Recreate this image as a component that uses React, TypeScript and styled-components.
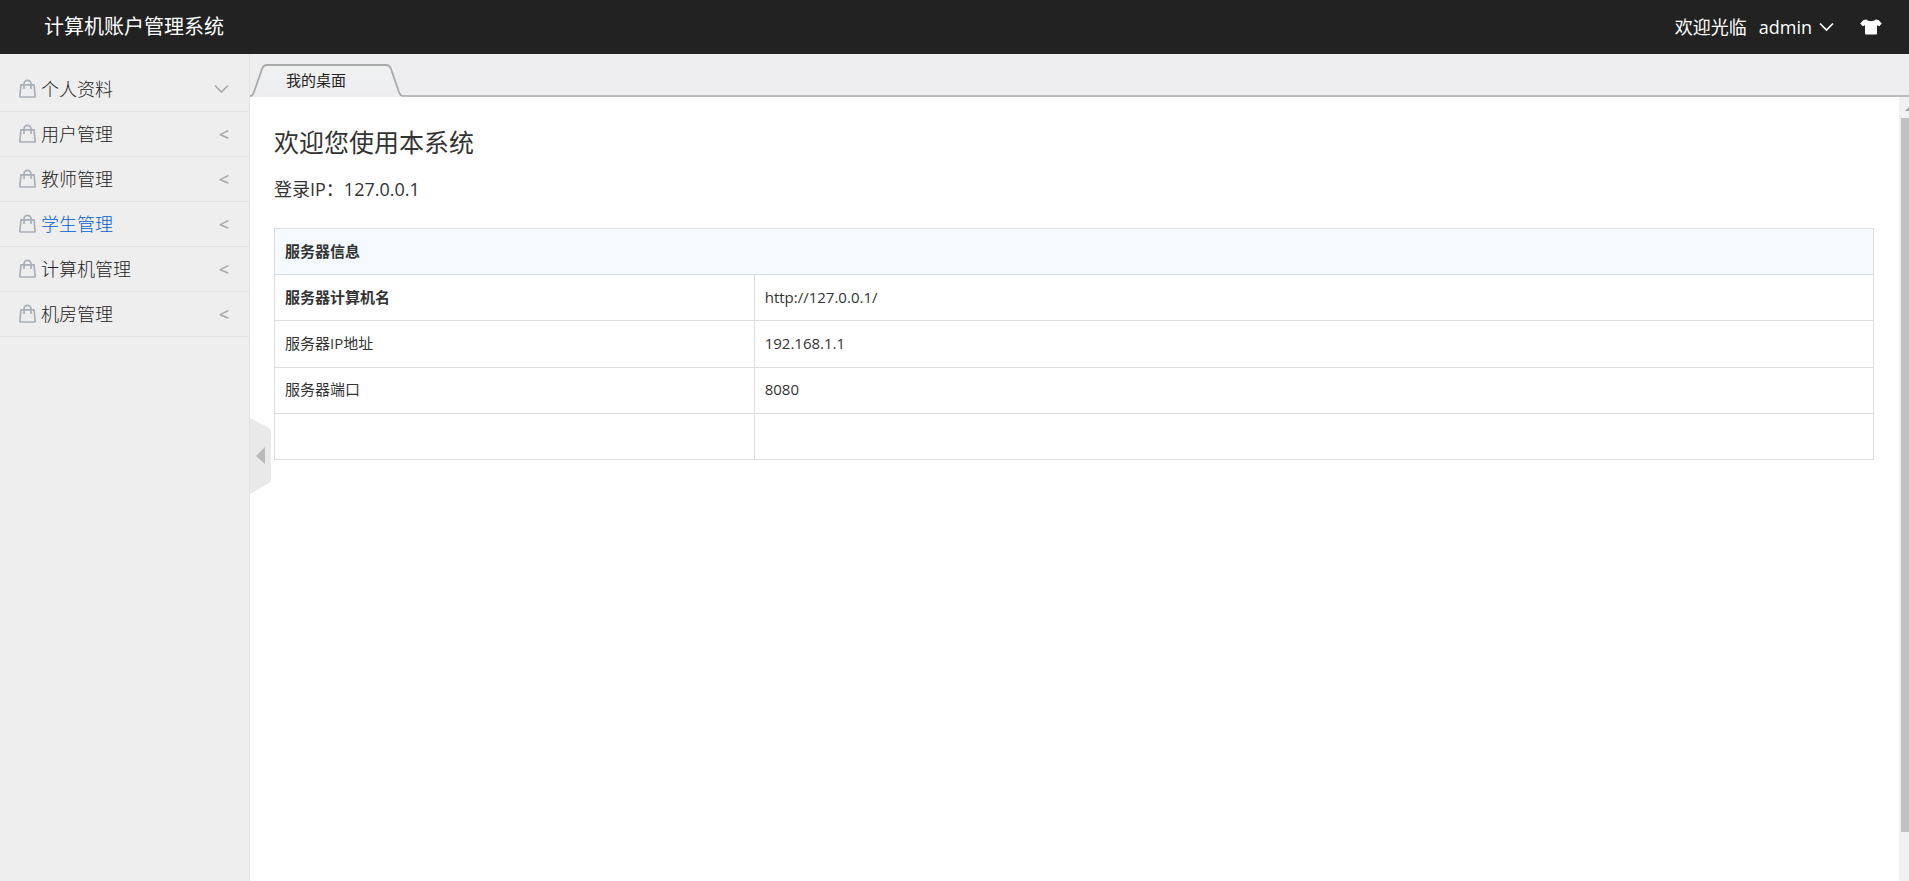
import React from 'react';
import styled, { createGlobalStyle } from 'styled-components';

const GlobalStyle = createGlobalStyle`
  *, *::before, *::after { box-sizing: border-box; }
  body {
    margin: 0;
    overflow: hidden;
    color: #333;
    background: #fff;
    font: 15px/24px 'Open Sans', 'Noto Sans CJK SC', sans-serif;
  }
  h1, p { margin: 0; font-weight: 400; }
  button { font: inherit; color: inherit; background: none; border: 0; padding: 0; cursor: pointer; }
  a { color: inherit; text-decoration: none; }
`;

const Page = styled.div`
  display: flex;
  flex-direction: column;
  height: 100vh;
`;

const Header = styled.header`
  display: flex;
  align-items: center;
  flex: none;
  height: 54px;
  padding: 0 27px 0 44px;
  color: #fff;
  background: #222;
`;

const Logo = styled.a`
  margin-right: auto;
  font-size: 20px;
`;

const UserArea = styled.div`
  display: flex;
  align-items: center;
  gap: 12px;
  font-size: 18px;
`;

const HeaderButton = styled.button`
  display: flex;
  align-items: center;
  gap: 7px;
`;

const SkinButton = styled(HeaderButton)`
  margin-left: 14px;
`;

const Body = styled.div`
  display: flex;
  flex: 1;
  min-height: 0;
`;

const Sidebar = styled.nav`
  flex: none;
  width: 250px;
  padding-top: 13px;
  background: #eee;
  border-right: 1px solid #e3e3e3;
`;

const MenuItem = styled.button<{ $active?: boolean }>`
  display: flex;
  align-items: center;
  gap: 4px;
  width: 100%;
  height: 45px;
  padding: 0 20px 0 18px;
  border-bottom: 1px solid #e3e3e3;
  font-size: 18px;
  font-weight: 300;
  color: ${(p) => (p.$active ? '#0060d0' : '#222')};
`;

const MenuMark = styled.span`
  display: flex;
  margin-left: auto;
  color: #aaa;
  font-weight: 600;
`;

const Main = styled.main`
  position: relative;
  display: flex;
  flex-direction: column;
  flex: 1;
  min-width: 0;
`;

const TabBar = styled.div`
  display: flex;
  align-items: flex-end;
  flex: none;
  height: 43px;
  background: #eeeef0;
  border-bottom: 2px solid #bbb;
`;

const Tab = styled.button`
  position: relative;
  width: 153px;
  height: 33px;
  margin-bottom: -2px;
  padding: 0 0 2px 36px;
  text-align: left;
  font-size: 15px;
  color: #222;
`;

const TabShape = styled.svg`
  position: absolute;
  inset: 0;
`;

const TabLabel = styled.span`
  position: relative;
`;

const Frame = styled.div`
  display: flex;
  flex: 1;
  min-height: 0;
`;

const Content = styled.section`
  flex: 1;
  padding: 27px 25px 0 24px;
`;

const Welcome = styled.h1`
  font-size: 25px;
  line-height: 36px;
`;

const LoginIp = styled.p`
  margin: 15px 0 25px;
  font-size: 18px;
  line-height: 28px;
`;

const InfoTable = styled.table`
  width: 100%;
  height: 232px;
  border-collapse: collapse;
  table-layout: fixed;
  td, th {
    height: 46px;
    padding: 0 10px 2px;
    border: 1px solid #ddd;
    text-align: left;
    font-weight: 400;
  }
  thead th { font-weight: 700; background: #f5fafe; }
`;

const NameColumn = styled.col`
  width: 30%;
`;

const Name = styled.th<{ $strong?: boolean }>`
  && { font-weight: ${(p) => (p.$strong ? 700 : 400)}; }
`;

const ScrollTrack = styled.div`
  display: flex;
  flex-direction: column;
  align-items: flex-end;
  flex: none;
  width: 10px;
  background: #f1f1f1;
`;

const ScrollArrow = styled.svg`
  flex: none;
  display: block;
  margin-bottom: 6px;
`;

const ScrollThumb = styled.div`
  width: 8px;
  height: calc(100% - 70px);
  background: #c1c1c1;
`;

const Collapse = styled.button`
  position: absolute;
  left: 0;
  top: calc(50% - 50px);
  display: flex;
`;

const menu = ['个人资料', '用户管理', '教师管理', '学生管理', '计算机管理', '机房管理'];

const rows = [
  { name: '服务器计算机名', value: 'http://127.0.0.1/', strong: true },
  { name: '服务器IP地址', value: '192.168.1.1' },
  { name: '服务器端口', value: '8080' },
  { name: '', value: '' },
];

const Chevron = () => (
  <svg width="15" height="10" viewBox="0 0 15 10" fill="none" stroke="currentColor" strokeWidth="1.7">
    <path d="M1 1.500 7.500 8 14 1.500" />
  </svg>
);

const BagIcon = () => (
  <svg width="19" height="20" viewBox="0 0 19 20" fill="none" stroke="#a9afb9" strokeWidth="1.7">
    <path d="M3 5.800h13l1.200 11.400a.8.8 0 0 1-.8.8H2.600a.8.8 0 0 1-.8-.8L3 5.800Z" />
    <path d="M6 10V4.800a3.500 3.500 0 0 1 7 0V10" />
  </svg>
);

const ShirtIcon = () => (
  <svg width="22" height="16" viewBox="0 0 22 16" fill="#fff">
    <path d="M6.500 0.500c1.500 2.300 7.500 2.300 9 0L18.500 1 21.800 4.500 19.300 7.200 17 6.200V14.500a1 1 0 0 1-1 1H6a1 1 0 0 1-1-1V6.200L2.700 7.200 0.200 4.500 3.500 1Z" />
  </svg>
);

export default function App() {
  return (
    <>
      <GlobalStyle />
      <Page>
        <Header>
          <Logo href="#">计算机账户管理系统</Logo>
          <UserArea>
            <span>欢迎光临</span>
            <HeaderButton>
              admin
              <Chevron />
            </HeaderButton>
            <SkinButton aria-label="换肤">
              <ShirtIcon />
            </SkinButton>
          </UserArea>
        </Header>
        <Body>
          <Sidebar>
            {menu.map((label, i) => (
              <MenuItem key={label} $active={label === '学生管理'}>
                <BagIcon />
                {label}
                <MenuMark>{i === 0 ? <Chevron /> : '<'}</MenuMark>
              </MenuItem>
            ))}
          </Sidebar>
          <Main>
            <TabBar>
              <Tab>
                <TabShape width="153" height="33" viewBox="0 0 153 33">
                  <defs>
                    <linearGradient id="tabFill" x1="0" y1="0" x2="0" y2="1">
                      <stop offset="0" stopColor="#f0f2f1" />
                      <stop offset="1" stopColor="#ededf0" />
                    </linearGradient>
                  </defs>
                  <path
                    d="M0 32C3 32 3 30 4 28L12 5C13 2 14 1 17 1H136C139 1 140 2 141 5L149 28C150 31 151 32 153 32V33H0Z"
                    fill="url(#tabFill)"
                  />
                  <path
                    d="M0 32C3 32 3 30 4 28L12 5C13 2 14 1 17 1H136C139 1 140 2 141 5L149 28C150 31 151 32 153 32"
                    fill="none"
                    stroke="#aaa"
                    strokeWidth="1.8"
                  />
                </TabShape>
                <TabLabel>我的桌面</TabLabel>
              </Tab>
            </TabBar>
            <Frame>
              <Content>
                <Welcome>欢迎您使用本系统</Welcome>
                <LoginIp>登录IP：127.0.0.1</LoginIp>
                <InfoTable>
                  <colgroup>
                    <NameColumn />
                    <col />
                  </colgroup>
                  <thead>
                    <tr>
                      <th colSpan={2}>服务器信息</th>
                    </tr>
                  </thead>
                  <tbody>
                    {rows.map((row, i) => (
                      <tr key={i}>
                        <Name scope="row" $strong={row.strong}>{row.name}</Name>
                        <td>{row.value}</td>
                      </tr>
                    ))}
                  </tbody>
                </InfoTable>
              </Content>
              <ScrollTrack>
                <ScrollArrow width="8" height="15" viewBox="0 0 8 15">
                  <path d="M4 14 8 10V14Z" fill="#a3a3a3" />
                </ScrollArrow>
                <ScrollThumb />
              </ScrollTrack>
            </Frame>
            <Collapse aria-label="收起菜单">
              <svg width="21" height="76" viewBox="0 0 21 76">
                <path d="M0 0 19 10Q21 11 21 13V62Q21 64 19 65L0 76Z" fill="#e9e9e9" />
                <path d="M6 38 15 29V46Z" fill="#b9b9b9" />
              </svg>
            </Collapse>
          </Main>
        </Body>
      </Page>
    </>
  );
}
